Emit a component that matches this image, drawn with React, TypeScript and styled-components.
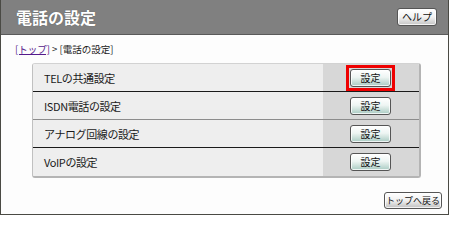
import React from "react";
import styled, { createGlobalStyle } from "styled-components";

const GlobalStyle = createGlobalStyle`
  html, body {
    margin: 0;
    padding: 0;
    background: #ffffff;
  }
  body {
    font-family: "Noto Sans CJK JP", "DejaVu Sans", sans-serif;
  }
`;

interface Item {
  label: string;
  line: "dark" | "light" | "none";
  focused?: boolean;
}

const items: Item[] = [
  { label: "TELの共通設定", line: "dark", focused: true },
  { label: "ISDN電話の設定", line: "light" },
  { label: "アナログ回線の設定", line: "dark" },
  { label: "VoIPの設定", line: "none" },
];

const App = () => {
  return (
    <>
      <GlobalStyle />
      <Frame>
        <Header>
          <Title>電話の設定</Title>
          <HeadButton>ヘルプ</HeadButton>
        </Header>
        <Breadcrumb>
          <CrumbLink href="#">[トップ]</CrumbLink> &gt; [電話の設定]
        </Breadcrumb>
        <Table>
          {items.map((item) => (
            <Row key={item.label} $line={item.line}>
              <LabelCell>{item.label}</LabelCell>
              <ActionCell>
                <FocusRing $focused={item.focused}>
                  <SetButton>設定</SetButton>
                </FocusRing>
              </ActionCell>
            </Row>
          ))}
        </Table>
        <Footer>
          <BackButton>トップへ戻る</BackButton>
        </Footer>
      </Frame>
    </>
  );
};

export default App;

const Frame = styled.div`
  width: 449px;
  height: 215px;
  box-sizing: border-box;
  border: 1px solid #4a4a44;
  border-top: none;
  background: #fdfdfd;
  display: flex;
  flex-direction: column;
`;

const Header = styled.div`
  height: 35px;
  flex-shrink: 0;
  box-sizing: border-box;
  background: #808080;
  border-bottom: 1px solid #5a5a5a;
  display: flex;
  align-items: center;
  justify-content: space-between;
  padding: 0 11px 1px 15px;
`;

const Title = styled.h1`
  margin: 0;
  color: #ffffff;
  font-size: 16px;
  font-weight: 700;
  letter-spacing: 0;
  text-shadow: 0 0 1px #555;
`;

const buttonBase = `
  box-sizing: border-box;
  font-family: "Noto Sans CJK JP", sans-serif;
  font-size: 10px;
  font-weight: 400;
  color: #111;
  border: 1px solid #555;
  border-radius: 3px;
  padding: 0;
  cursor: pointer;
  white-space: nowrap;
  box-shadow: inset 0 0 0 1px rgba(255, 255, 255, 0.8);
  line-height: 1;
`;

const HeadButton = styled.button`
  ${buttonBase}
  width: 40px;
  height: 18px;
  background: linear-gradient(#ffffff, #f2f2f2 50%, #c4c4c4);
`;

const Breadcrumb = styled.div`
  font-size: 9.5px;
  color: #222;
  padding: 8px 0 0 14px;
  height: 19px;
  line-height: 12px;
  flex-shrink: 0;
`;

const CrumbLink = styled.a`
  color: #551a8b;
  text-decoration: underline;
`;

const Table = styled.div`
  margin: 1px 0 0 31px;
  width: 389px;
  box-sizing: border-box;
  border-top: 1px solid #d2d2d2;
  border-left: 1px solid #c0c0c0;
  border-right: 2px solid #b4b4b4;
  border-bottom: 2px solid #b4b4b4;
  border-radius: 3px;
  overflow: hidden;
  display: flex;
  flex-direction: column;
  flex-shrink: 0;
`;

const Row = styled.div<{ $line: "dark" | "light" | "none" }>`
  display: flex;
  height: 28px;
  box-sizing: border-box;
  border-bottom: ${({ $line }) =>
    $line === "dark"
      ? "1px solid #1a1a1a"
      : $line === "light"
        ? "1px solid #8c8c8c"
        : "none"};
`;

const LabelCell = styled.div`
  width: 290px;
  background: #eeeeee;
  display: flex;
  align-items: center;
  padding-left: 11px;
  box-sizing: border-box;
  font-size: 11px;
  letter-spacing: -0.4px;
  color: #1a1a1a;
`;

const ActionCell = styled.div`
  flex: 1;
  background: #d7d7d7;
  display: flex;
  align-items: center;
  justify-content: center;
  padding-right: 1px;
`;

const FocusRing = styled.span<{ $focused?: boolean }>`
  display: flex;
  padding: 1px;
  border: 3px solid ${({ $focused }) => ($focused ? "#ee0000" : "transparent")};
`;

const SetButton = styled.button`
  ${buttonBase}
  width: 41px;
  height: 18px;
  background: linear-gradient(#ffffff, #eef5f3 45%, #a9cbc2);
`;

const Footer = styled.div`
  display: flex;
  justify-content: flex-end;
  padding: 14px 6px 0 0;
`;

const BackButton = styled.button`
  ${buttonBase}
  width: 58px;
  height: 17px;
  font-size: 9px;
  background: linear-gradient(#ffffff, #f0f0f0 50%, #c0c0c0);
`;
